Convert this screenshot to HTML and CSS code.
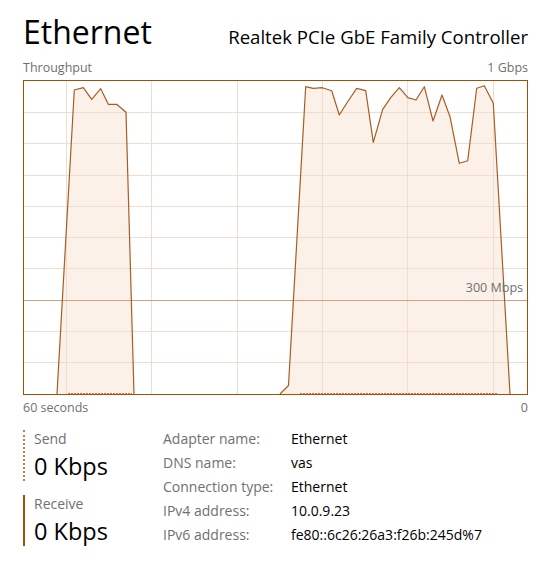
FILE: index.html
```html
<!DOCTYPE html>
<html lang="en">
<head>
  <meta charset="UTF-8" />
  <meta name="viewport" content="width=device-width, initial-scale=1.0" />
  <title>Ethernet</title>
  <link rel="stylesheet" href="styles.css">
</head>
<body>
  <div class="page">
    <header class="head">
      <h1 class="title">Ethernet</h1>
      <div class="adapter">Realtek PCIe GbE Family Controller</div>
    </header>

    <div class="axis axis-top">
      <span>Throughput</span>
      <span>1 Gbps</span>
    </div>

    <div class="graph">
      <svg class="chart" width="503" height="313" viewBox="24 81 503 313">
        <!-- receive fill -->
        <polygon class="area" points="57,394 74.3,90 83.3,87.7 91.7,99.3 100.7,88.7 108.3,104.3 116.7,104.3 126,112.3 134,394" />
        <polygon class="area" points="280,394 288.5,385.5 305.7,86.7 313.3,88.3 322.3,87.7 331.7,90.7 339.3,115 347.8,101.5 356.7,88.3 365.7,90.7 373.3,142.3 382.7,109.3 390.7,97.7 399.3,87.7 407.8,97.7 416,100 424.3,86.7 433,121 442,95 450,116.7 459.3,163.3 467.7,160.7 476.7,88.3 484.3,85.7 493.3,103.3 510,394" />

        <!-- grid -->
        <g class="grid">
          <line x1="24" x2="527" y1="112.5" y2="112.5" />
          <line x1="24" x2="527" y1="143.5" y2="143.5" />
          <line x1="24" x2="527" y1="175.5" y2="175.5" />
          <line x1="24" x2="527" y1="206.5" y2="206.5" />
          <line x1="24" x2="527" y1="237.5" y2="237.5" />
          <line x1="24" x2="527" y1="268.5" y2="268.5" />
          <line x1="24" x2="527" y1="331.5" y2="331.5" />
          <line x1="24" x2="527" y1="362.5" y2="362.5" />
          <line x1="66.5" x2="66.5" y1="81" y2="394" />
          <line x1="151.5" x2="151.5" y1="81" y2="394" />
          <line x1="237.5" x2="237.5" y1="81" y2="394" />
          <line x1="322.5" x2="322.5" y1="81" y2="394" />
          <line x1="407.5" x2="407.5" y1="81" y2="394" />
          <line x1="493.5" x2="493.5" y1="81" y2="394" />
        </g>
        <line class="limit" x1="24" x2="527" y1="300.5" y2="300.5" />

        <!-- send (flat at zero) -->
        <line class="send-line" x1="68" x2="132" y1="393.5" y2="393.5" />
        <line class="send-line" x1="300" x2="498" y1="393.5" y2="393.5" />

        <!-- receive line -->
        <polyline class="recv-line" points="57,394 74.3,90 83.3,87.7 91.7,99.3 100.7,88.7 108.3,104.3 116.7,104.3 126,112.3 134,394" />
        <polyline class="recv-line" points="280,394 288.5,385.5 305.7,86.7 313.3,88.3 322.3,87.7 331.7,90.7 339.3,115 347.8,101.5 356.7,88.3 365.7,90.7 373.3,142.3 382.7,109.3 390.7,97.7 399.3,87.7 407.8,97.7 416,100 424.3,86.7 433,121 442,95 450,116.7 459.3,163.3 467.7,160.7 476.7,88.3 484.3,85.7 493.3,103.3 510,394" />
      </svg>
      <span class="scale">300 Mbps</span>
    </div>

    <div class="axis axis-bottom">
      <span>60 seconds</span>
      <span>0</span>
    </div>

    <section class="stats">
      <div class="rates">
        <div class="rate rate-send">
          <div class="rate-label">Send</div>
          <div class="rate-value">0 Kbps</div>
        </div>
        <div class="rate rate-recv">
          <div class="rate-label">Receive</div>
          <div class="rate-value">0 Kbps</div>
        </div>
      </div>

      <dl class="props">
        <dt>Adapter name:</dt><dd>Ethernet</dd>
        <dt>DNS name:</dt><dd>vas</dd>
        <dt>Connection type:</dt><dd>Ethernet</dd>
        <dt>IPv4 address:</dt><dd>10.0.9.23</dd>
        <dt>IPv6 address:</dt><dd>fe80::6c26:26a3:f26b:245d%7</dd>
      </dl>
    </section>
  </div>
</body>
</html>
```

FILE: styles.css
```css
body {
  margin: 0;
  background: #fff;
  color: #000;
  font-family: "Open Sans", "Noto Sans", sans-serif;
}

.page {
  width: 505px;
  padding: 0 0 0 23px;
}

.head {
  display: flex;
  justify-content: space-between;
  align-items: baseline;
  height: 60px;
}
.title {
  margin: 0;
  font-size: 32px;
  font-weight: 400;
  line-height: 63px;
}
.adapter {
  font-size: 18.6px;
  line-height: 63px;
}

.axis {
  display: flex;
  justify-content: space-between;
  font-size: 12.5px;
  color: #707070;
}
.axis-top { height: 20px; line-height: 16px; }
.axis-bottom { height: 24px; line-height: 26px; }

.graph {
  position: relative;
  width: 503px;
  height: 313px;
  border: 1px solid #a54f06;
}
.chart { display: block; }
.area { fill: #fbf1e8; stroke: none; }
.grid line { stroke: #efdecd; stroke-width: 1; }
.limit { stroke: #c9a386; stroke-width: 1; }
.send-line { stroke: #d6773a; stroke-width: 1; stroke-dasharray: 2 1; }
.recv-line { fill: none; stroke: #a85d22; stroke-width: 1.2; stroke-linejoin: round; }

.scale {
  position: absolute;
  right: 4px;
  top: 199px;
  font-size: 12.5px;
  color: #707070;
  line-height: 16px;
}

.stats {
  display: flex;
  padding-top: 11px;
}
.rates {
  width: 140px;
}
.rate {
  padding-left: 9px;
  height: 51px;
  margin-bottom: 14px;
}
.rate-send { border-left: 2px dotted #e0743a; }
.rate-recv { border-left: 2px solid #a54f06; }
.rate-label {
  font-size: 14px;
  color: #707070;
  line-height: 18px;
}
.rate-value {
  font-size: 23.5px;
  line-height: 36px;
}

.props {
  margin: 0;
  display: grid;
  grid-template-columns: 128px auto;
  grid-auto-rows: 24px;
  font-size: 14px;
  line-height: 18px;
}
.props dt { color: #707070; }
.props dd { margin: 0; color: #000; }
```
